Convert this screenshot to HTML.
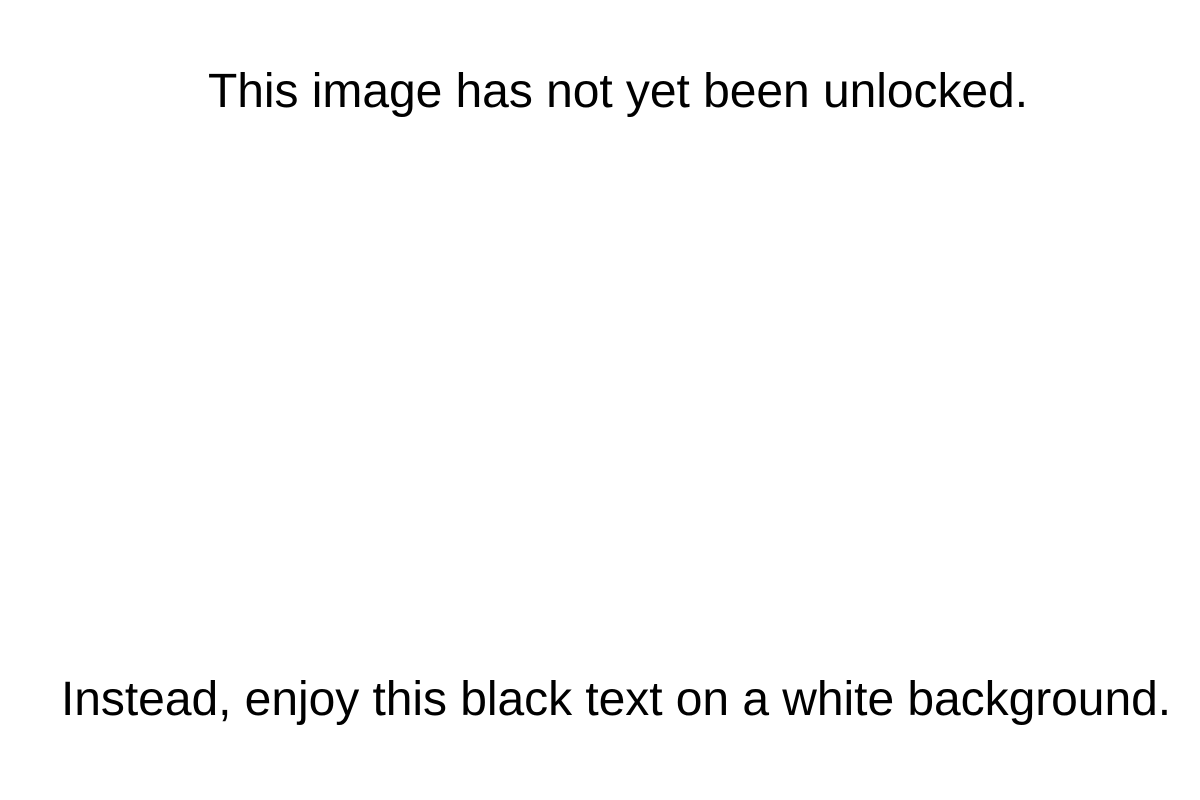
<!DOCTYPE html>
<html><head><meta charset="utf-8"><style>
html,body{margin:0;padding:0;width:1200px;height:800px;background:#fff;overflow:hidden}
.t{position:absolute;font-family:"Liberation Sans",Arial,sans-serif;font-size:48px;line-height:1;color:#000;white-space:nowrap;letter-spacing:-0.05px}
</style></head><body>
<div class="t" style="left:208px;top:68px">This image has not yet been unlocked.</div>
<div class="t" style="left:61px;top:676px">Instead, enjoy this black text on a white background.</div>
</body></html>
